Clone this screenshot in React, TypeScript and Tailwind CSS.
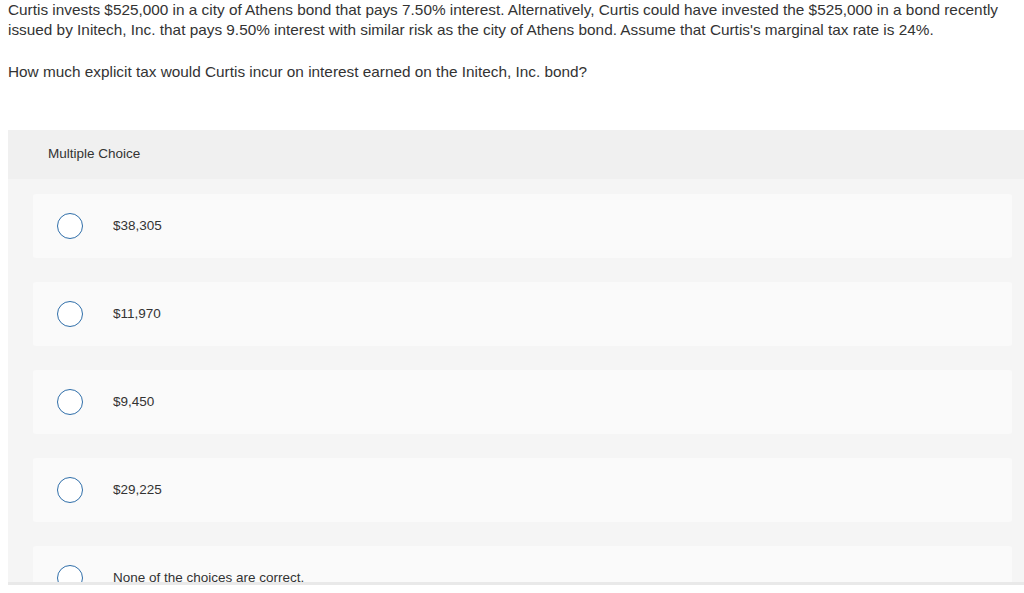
const choices = ["$38,305", "$11,970", "$9,450", "$29,225", "None of the choices are correct."];

export default function App() {
  return (
    <div
      className="h-[593px] w-[1024px] overflow-hidden bg-white text-[#333333]"
      style={{ fontFamily: '"Liberation Sans", Arial, sans-serif' }}
    >
      <div className="px-2 text-[15.35px] leading-[20px]">
        <p className="w-[1005px]">
          Curtis invests $525,000 in a city of Athens bond that pays 7.50% interest. Alternatively, Curtis could have
          invested the $525,000 in a bond recently issued by Initech, Inc. that pays 9.50% interest with similar risk as
          the city of Athens bond. Assume that Curtis's marginal tax rate is 24%.
        </p>
        <p className="mt-[22px]">How much explicit tax would Curtis incur on interest earned on the Initech, Inc. bond?</p>
      </div>

      <div className="ml-2 mt-[48px] h-[455px] overflow-hidden border-b-[3px] border-[#e9e9e9] bg-[#f5f5f5]">
        <div className="flex h-[49px] items-center bg-[#f0f0f0] pl-10 text-[13.5px]">Multiple Choice</div>
        <div className="flex flex-col gap-6 pl-[25px] pr-3 pt-[15px]">
          {choices.map((c) => (
            <div key={c} className="flex h-16 shrink-0 items-center rounded-[3px] bg-[#fafafa] pl-6">
              <span className="h-[26px] w-[26px] shrink-0 rounded-full border-[1.5px] border-[#2f6ea9] bg-white" />
              <span className="ml-[30px] text-[13.5px]">{c}</span>
            </div>
          ))}
        </div>
      </div>
    </div>
  );
}
